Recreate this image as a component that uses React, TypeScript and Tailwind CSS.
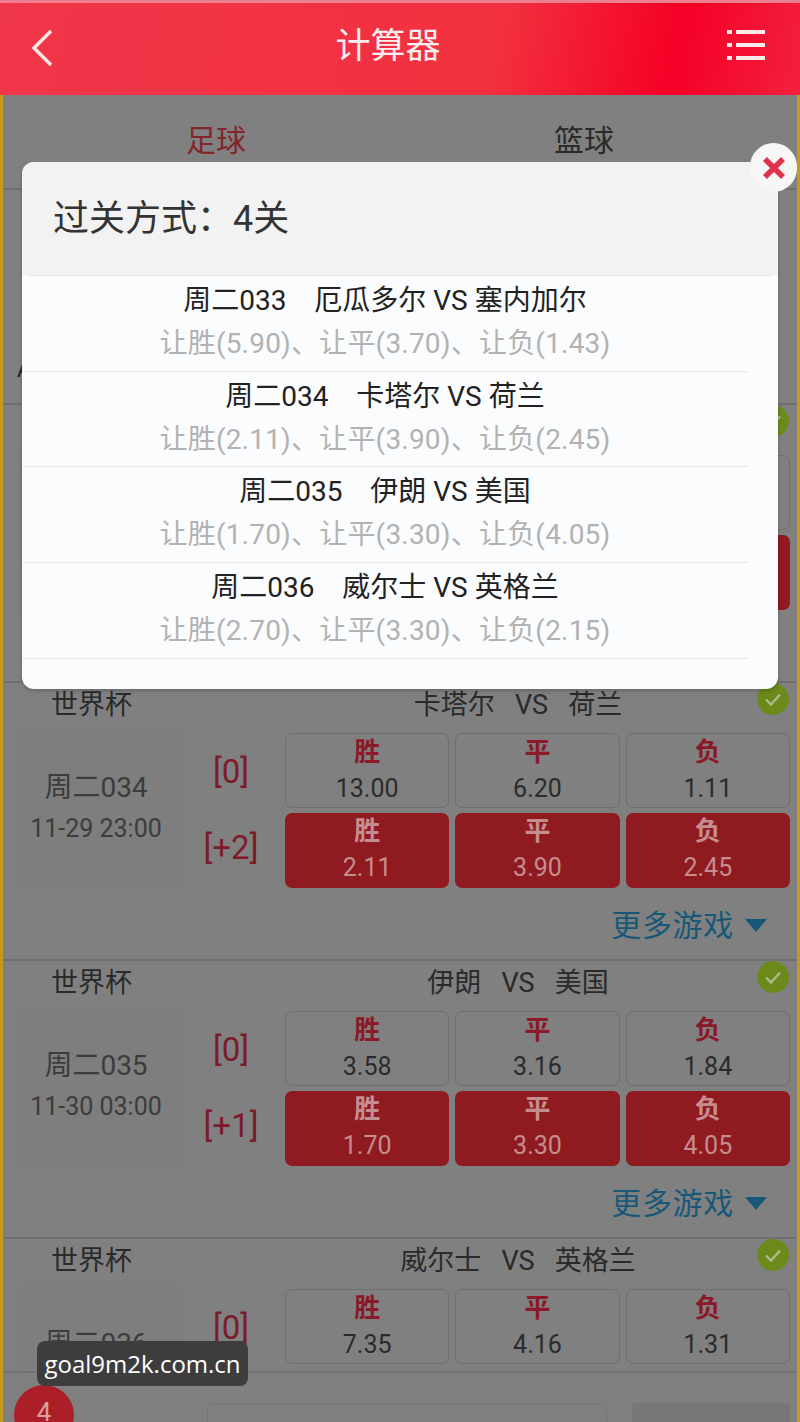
const FONT = "font-['Roboto','Noto_Sans_CJK_SC',sans-serif]";

const picks = [
  { title: '周二033    厄瓜多尔 VS 塞内加尔', odds: '让胜(5.90)、让平(3.70)、让负(1.43)' },
  { title: '周二034    卡塔尔 VS 荷兰', odds: '让胜(2.11)、让平(3.90)、让负(2.45)' },
  { title: '周二035    伊朗 VS 美国', odds: '让胜(1.70)、让平(3.30)、让负(4.05)' },
  { title: '周二036    威尔士 VS 英格兰', odds: '让胜(2.70)、让平(3.30)、让负(2.15)' },
];

// the last card runs under the bottom bar, so it has no second row
const matches = [
  { teams: '厄瓜多尔   VS   塞内加尔', code: '周二033', time: '11-29 23:00', hcp: '[+1]', plain: ['2.90', '3.10', '2.50'], red: ['5.90', '3.70', '1.43'] },
  { teams: '卡塔尔   VS   荷兰', code: '周二034', time: '11-29 23:00', hcp: '[+2]', plain: ['13.00', '6.20', '1.11'], red: ['2.11', '3.90', '2.45'] },
  { teams: '伊朗   VS   美国', code: '周二035', time: '11-30 03:00', hcp: '[+1]', plain: ['3.58', '3.16', '1.84'], red: ['1.70', '3.30', '4.05'] },
  { teams: '威尔士   VS   英格兰', code: '周二036', time: '', hcp: '', plain: ['7.35', '4.16', '1.31'], red: [] },
];

const labels = ['胜', '平', '负'];

function CheckBadge() {
  return (
    <div className="absolute right-[8px] top-0 w-[32px] h-[32px] rounded-full bg-[#6c8a1a] flex items-center justify-center">
      <svg width="20" height="20" viewBox="0 0 20 20" fill="none" stroke="#aebb8c" strokeWidth="2.4">
        <path d="M3 10.5l5 5 9-10" />
      </svg>
    </div>
  );
}

function OddsRow({ values, red }: { values: string[]; red?: boolean }) {
  return (
    <div className="flex gap-[6px]">
      {values.map((v, i) => (
        <div
          key={i}
          className={
            red
              ? 'flex-1 h-[75px] rounded-[7px] bg-[#8f1b20] flex flex-col items-center'
              : 'flex-1 h-[75px] rounded-[7px] border border-[#6e6e6e] flex flex-col items-center'
          }
        >
          <span className={red ? 'text-[26px] leading-[36px] font-bold text-[#c58d8f]' : 'text-[26px] leading-[36px] font-bold text-[#8b1928]'}>
            {labels[i]}
          </span>
          <span className={red ? 'text-[25px] leading-[37px] text-[#c58d8f]' : 'text-[25px] leading-[37px] text-[#2b2b2b]'}>{v}</span>
        </div>
      ))}
    </div>
  );
}

function MatchCard({ m }: { m: (typeof matches)[number] }) {
  return (
    <div className="relative h-[278px] border-t-2 border-[#6f6f6f] pr-[7px]">
      <CheckBadge />
      <div className="flex h-[44px] items-center text-[27px] text-[#2a2a2a]">
        <span className="w-[178px] pl-[48px]">世界杯</span>
        <span className="flex-1 pl-[65px] text-center whitespace-pre">{m.teams}</span>
      </div>
      <div className="flex h-[161px]">
        <div className="w-[166px] ml-[14px] bg-[#7e7e7e] flex flex-col items-center pt-[42px] pr-[8px] text-[#3c3c3c]">
          <span className="text-[28px] leading-[38px]">{m.code}</span>
          <span className="text-[25px] leading-[44px] whitespace-nowrap">{m.time}</span>
        </div>
        <div className="w-[102px] flex flex-col items-center pt-[25px] pr-[6px] text-[33px] text-[#7c1c2a]">
          <span className="leading-[40px]">[0]</span>
          <span className="leading-[40px] mt-[36px]">{m.hcp}</span>
        </div>
        <div className="flex-1 flex flex-col gap-[5px] pt-[6px]">
          <OddsRow values={m.plain} />
          <OddsRow values={m.red} red />
        </div>
      </div>
      <div className="flex items-center justify-end gap-[11px] pr-[23px] h-[71px] pt-[4px] text-[30px] tracking-[0.7px] text-[#175878]">
        <span>更多游戏</span>
        <span className="w-0 h-0 border-x-[11px] border-x-transparent border-t-[13px] border-t-[#175878]" />
      </div>
    </div>
  );
}

function PicksModal() {
  return (
    <div className="absolute left-[22px] top-[162px] w-[756px] h-[527px] rounded-[12px] bg-[#fbfcfd] shadow-[0_2px_4px_rgba(0,0,0,0.2)]">
      <div className="h-[113px] rounded-t-[12px] bg-[#f2f2f2] flex items-center pl-[31px] text-[36px] text-[#333]">
        过关方式：4关
      </div>
      <div className="h-[1px] mx-[6px] bg-[#e8e8e8]" />
      <div className="pr-[30px]">
        {picks.map((p) => (
          <div key={p.title} className="h-[95.7px] border-b border-[#eee6e6] flex flex-col items-center pt-[6px]">
            <span className="text-[28px] leading-[38px] whitespace-pre text-[#222]">{p.title}</span>
            <span className="text-[28px] leading-[47px] whitespace-nowrap tracking-[0.2px] text-[#b2b2b2]">{p.odds}</span>
          </div>
        ))}
      </div>
      <div className="absolute right-[-19px] top-[-19px] w-[47px] h-[49px] rounded-full bg-[#f6f6f6] flex items-center justify-center">
        <svg width="24" height="22" viewBox="0 0 24 22" fill="none" stroke="#e0304a" strokeWidth="5.5">
          <path d="M3 2l18 18M21 2L3 20" />
        </svg>
      </div>
    </div>
  );
}

export default function App() {
  return (
    <div className={`${FONT} relative w-[800px] h-[1422px] overflow-hidden bg-[#808080]`}>
      <header className="h-[95px] border-t-[3px] border-[#ee7f8e] bg-[linear-gradient(100deg,#f0364a_0%,#f2303f_62%,#f50026_84%,#f2203c_100%)] flex items-center justify-between pl-[30px] pr-[34px]">
        <svg className="mb-[3px]" width="24" height="38" viewBox="0 0 24 38" fill="none" stroke="#f8e5e5" strokeWidth="3.4">
          <path d="M21 2L4 19l17 17" />
        </svg>
        <span className="text-[35px] pb-[4px] pr-[4px] text-[#fbeeee]">计算器</span>
        <svg className="mb-[8px]" width="40" height="36" viewBox="0 0 40 36" fill="none" stroke="#fbeaea" strokeWidth="4">
          <path d="M1 5h5M1 18h5M1 31h5M10 5h29M10 18h29M10 31h29" />
        </svg>
      </header>

      <main className="border-x-[3px] border-[#c49a1e] h-[1327px] overflow-hidden">
        <div className="flex h-[95px] border-b-2 border-[#6f6f6f] pt-[26px] text-[30px] leading-[40px]">
          <span className="w-[426px] text-center text-[#82262c]">足球</span>
          <span className="w-[310px] text-center text-[#2a2a2a]">篮球</span>
        </div>
        <div className="h-[213px] pt-[168px] pl-[14px] text-[22px] leading-[24px] text-[#222]">A</div>
        {matches.map((m) => (
          <MatchCard key={m.code} m={m} />
        ))}
      </main>

      <div className="absolute left-[3px] right-[3px] top-[1369px] h-[53px] pt-[2px] bg-[#808080]">
        <div className="h-full border-t-2 border-[#727272] flex pt-[30px] gap-[25px] pl-[204px] pr-[7px]">
          <div className="w-[400px] h-[30px] rounded-t-[6px] border-x border-t border-[#767676]" />
          <div className="flex-1 h-[30px] rounded-t-[4px] bg-[#777777]" />
        </div>
      </div>

      <PicksModal />

      <div className="absolute left-[14px] top-[1385px] w-[60px] h-[60px] rounded-full bg-[#ac1f28] flex justify-center pt-[8px] text-[26px] text-[#d8a0a0]">
        4
      </div>
      <div className="absolute left-[37px] top-[1341px] w-[211px] h-[45px] rounded-[8px] bg-[#3d3d3d] flex items-center justify-center font-['Open_Sans',sans-serif] text-[24px] text-white">
        goal9m2k.com.cn
      </div>
    </div>
  );
}
